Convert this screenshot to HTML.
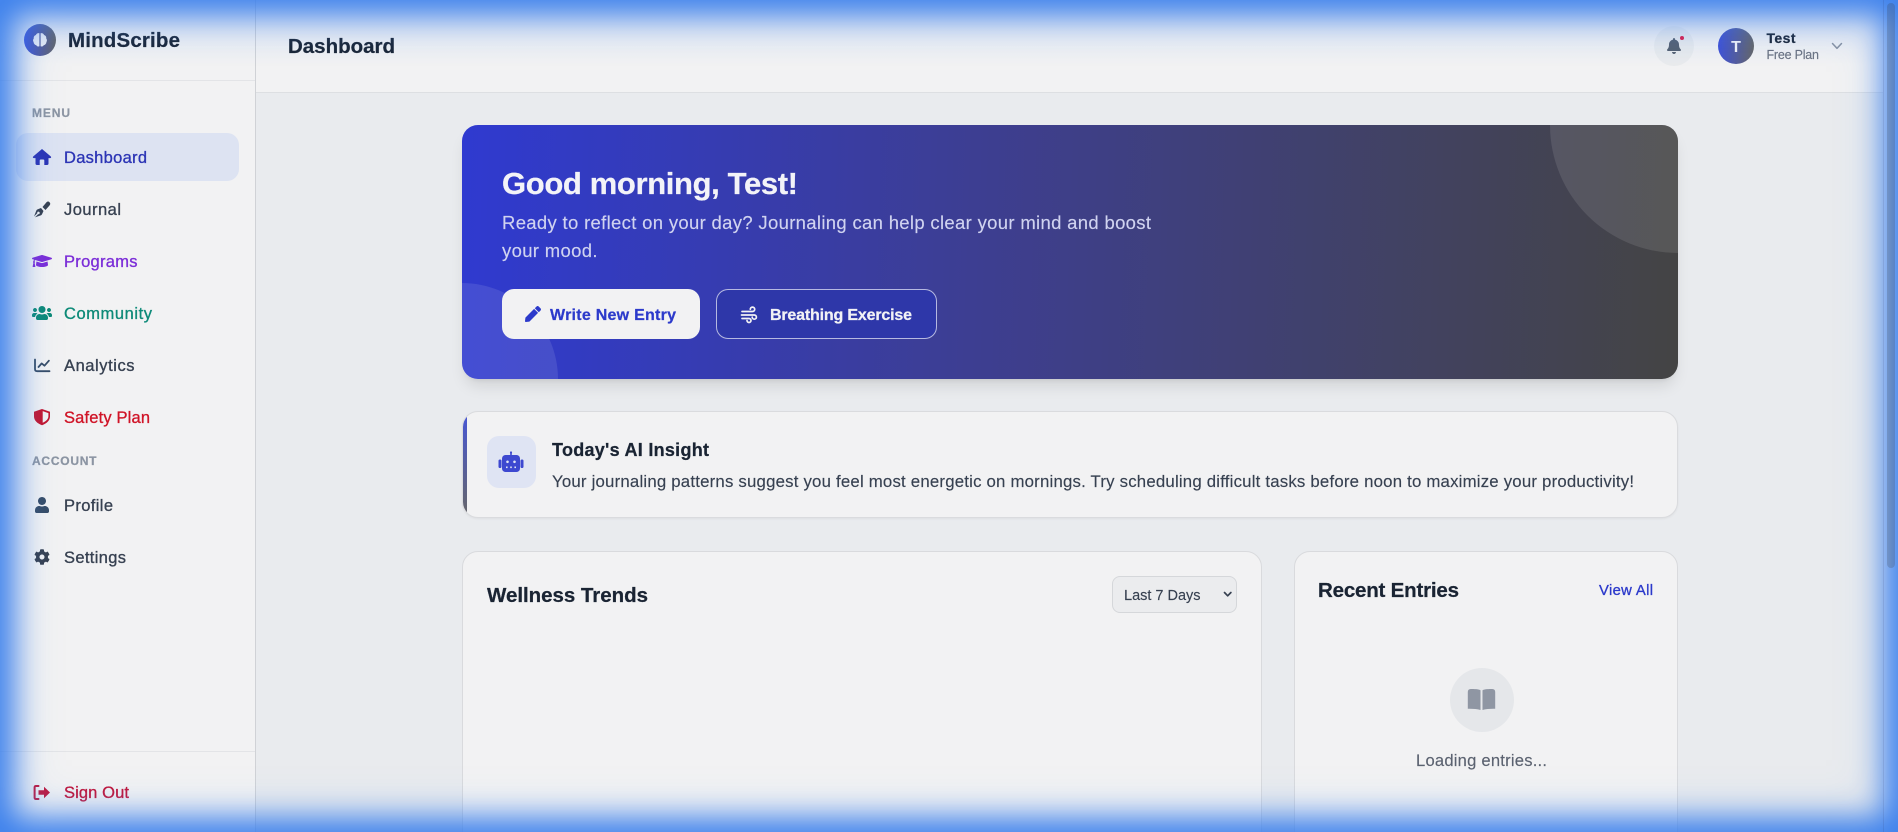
<!DOCTYPE html>
<html lang="en">
<head>
<meta charset="utf-8">
<title>MindScribe Dashboard</title>
<style>
html,body{margin:0;padding:0;width:1898px;height:832px;overflow:hidden;background:#e9ebee;font-family:"Liberation Sans",sans-serif}
#wrap{position:relative;width:1898px;height:832px;overflow:hidden;background:#e9ebee}
.b{position:absolute;box-sizing:border-box}
#side{left:0;top:0;width:256px;height:832px;background:#f2f2f3;border-right:1px solid #d0d2d6}
#s1{left:0;top:80px;width:255px;height:1px;background:#e3e4e7}
#s2{left:0;top:751px;width:255px;height:1px;background:#e3e4e7}
#act{left:16px;top:133px;width:223px;height:48px;background:#dde3f2;border-radius:12px}
#head{left:256px;top:0;width:1627px;height:93px;background:#f2f2f3;border-bottom:1px solid #dddfe2}
#logo{left:24px;top:24px;width:32px;height:32px;border-radius:50%;background:linear-gradient(90deg,#3f51d8,#666)}
#bell{left:1654px;top:26px;width:40px;height:40px;border-radius:50%;background:#e9ebed}
#ava{left:1718px;top:28px;width:36px;height:36px;border-radius:50%;background:linear-gradient(90deg,#3f51d8,#666)}
#hero{left:462px;top:125px;width:1216px;height:254px;border-radius:16px;background:linear-gradient(92deg,#2f3ad0 0%,#3d3e92 42%,#444 100%);box-shadow:0 10px 15px -3px rgba(0,0,0,.1),0 4px 6px -4px rgba(0,0,0,.1);overflow:hidden}
#c1{left:1088px;top:-128px;width:256px;height:256px;border-radius:50%;background:rgba(255,255,255,.1)}
#c2{left:-96px;top:158px;width:192px;height:192px;border-radius:50%;background:rgba(255,255,255,.1)}
#w{left:502px;top:289px;width:198px;height:50px;border-radius:12px;background:#f2f2f3}
#br{left:716px;top:289px;width:221px;height:50px;border-radius:12px;background:#2e37a9;border:1px solid rgba(255,255,255,.65)}
#ins{left:462px;top:411px;width:1216px;height:107px;border-radius:16px;background:#f2f2f3;border:1px solid #dadbde;box-shadow:0 1px 2px rgba(0,0,0,.05);overflow:hidden}
#bar{left:-1px;top:-1px;width:5px;height:107px;background:linear-gradient(180deg,#4656d8,#666)}
#rb{left:487px;top:436px;width:49px;height:52px;border-radius:12px;background:#dfe4f3}
.card{top:551px;height:320px;border-radius:16px;background:#f2f2f3;border:1px solid #d9dadd}
#wt{left:462px;width:800px}
#re{left:1294px;width:384px}
#sel{left:1112px;top:576px;width:125px;height:37px;border-radius:8px;background:#ebecee;border:1px solid #d5d7da}
#bk{left:1450px;top:668px;width:64px;height:64px;border-radius:50%;background:#e5e7ea}
#trk{left:1883px;top:0;width:15px;height:832px;background:#f2f2f3}
#lay{position:absolute;left:0;top:0}
#glow{position:absolute;left:0;top:0;width:1898px;height:832px;box-shadow:inset 0 0 30px 13px #3c80ec,inset 0 0 60px 0 rgba(60,128,236,.35);pointer-events:none}
#gt{left:0;top:0;width:1898px;height:65px;background:linear-gradient(180deg,rgba(60,128,236,.15),rgba(60,128,236,0))}
#tl{left:1883px;top:0;width:1px;height:832px;background:rgba(40,60,110,.14)}
#thm{left:1887px;top:3px;width:8px;height:565px;border-radius:4px;background:rgba(60,60,60,.22)}
text{font-family:"Liberation Sans",sans-serif}
.m{stroke:currentColor;stroke-width:.32;fill:currentColor}
.t{stroke:currentColor;stroke-width:.14;fill:currentColor}
.h{font-weight:700;stroke:currentColor;stroke-width:.25;fill:currentColor}
.n{font-size:16.5px}
</style>
</head>
<body>
<div id="wrap">
<div class="b" id="side"></div>
<div class="b" id="s1"></div>
<div class="b" id="s2"></div>
<div class="b" id="act"></div>
<div class="b" id="logo"></div>
<div class="b" id="head"></div>
<div class="b" id="bell"></div>
<div class="b" id="ava"></div>
<div class="b" id="hero"><div class="b" id="c1"></div><div class="b" id="c2"></div></div>
<div class="b" id="w"></div>
<div class="b" id="br"></div>
<div class="b" id="ins"><div class="b" id="bar"></div></div>
<div class="b" id="rb"></div>
<div class="b card" id="wt"></div>
<div class="b card" id="re"></div>
<div class="b" id="sel"></div>
<div class="b" id="bk"></div>
<div class="b" id="trk"></div>

<svg id="lay" width="1898" height="832" viewBox="0 0 1898 832" xmlns="http://www.w3.org/2000/svg">
<!-- logo -->
<path d="M39.400 33.200c-1.600-.4-3 .4-3.500 1.800-1.500.4-2.400 1.900-2.100 3.400-.9 1-1 2.600-.2 3.700.1 1.600 1.200 2.800 2.700 3.100.7 1.200 2.100 1.600 3.100 1.100zM40.600 33.200c1.600-.4 3 .4 3.500 1.800 1.500.4 2.400 1.900 2.100 3.400.9 1 1 2.600.2 3.700-.1 1.600-1.200 2.800-2.700 3.100-.7 1.200-2.100 1.600-3.100 1.100z" fill="#f0f1f6"/>
<text x="68" y="47" class="h" font-size="20.500" style="color:#1a2433" textLength="112" lengthAdjust="spacing">MindScribe</text>
<text x="288" y="53" class="h" font-size="20.500" style="color:#1a2433" textLength="107" lengthAdjust="spacing">Dashboard</text>

<text x="32" y="117" class="h" font-size="12" style="color:#8c95a3" textLength="38" lengthAdjust="spacing">MENU</text>
<text x="32" y="465" class="h" font-size="12" style="color:#8c95a3" textLength="64.500" lengthAdjust="spacing">ACCOUNT</text>

<!-- nav icons -->
<path fill="#2c35b5" d="M42 149l8.700 7.400q.8.800 .3 1.300-.4.400-1 .4H48.500v5.400q0 1.500-1.500 1.500h-2.700v-4.500q0-1-1-1h-2.600q-1 0-1 1V165H37q-1.500 0-1.500-1.500V158.100H34q-.6 0-1-.4-.5-.5.3-1.300z"/>
<g fill="#374151"><path d="M42.500 207l3 3 4-4.500q1.500-2 0-3.300-1.300-1.300-3 0z"/><path d="M41 208l-3.500 1.400q-.9.400-1.200 1.200L34 216.500l3.200-3.200a1.300 1.300 0 1 1 .9.9l-3.200 3.200 5.900-2q.8-.3 1.200-1.200L43.500 211z"/></g>
<svg x="32" y="253" width="20" height="16" viewBox="0 0 640 512"><path fill="#7c2ed8" d="M622.340 153.200L343.400 67.500c-15.200-4.670-31.600-4.670-46.790 0L17.660 153.200c-23.540 7.230-23.540 38.360 0 45.590l48.630 14.940c-10.670 13.190-17.230 29.280-17.880 46.900C38.780 266.150 32 276.110 32 288c0 10.780 5.680 19.850 13.860 25.650L20.330 428.530C18.110 438.520 25.710 448 35.940 448h56.110c10.240 0 17.840-9.480 15.620-19.470L82.140 313.650C90.320 307.850 96 298.780 96 288c0-11.570-6.470-21.250-15.660-26.870.76-15.020 8.440-28.300 20.690-36.720L296.600 284.500c9.060 2.780 26.440 6.250 46.790 0l278.950-85.700c23.550-7.240 23.550-38.360 0-45.600zM352.790 315.090c-28.530 8.760-52.840 3.920-65.590 0l-145.020-44.550L128 384c0 35.350 85.960 64 192 64s192-28.650 192-64l-14.180-113.470-145.030 44.560z"/></svg>
<svg x="32" y="305" width="20" height="16" viewBox="0 0 640 512"><path fill="#0d8a78" d="M96 224c35.300 0 64-28.700 64-64s-28.700-64-64-64-64 28.700-64 64 28.700 64 64 64zm448 0c35.300 0 64-28.700 64-64s-28.700-64-64-64-64 28.700-64 64 28.700 64 64 64zm32 32h-64c-17.600 0-33.500 7.100-45.100 18.600 40.300 22.100 68.900 62 75.100 109.400h66c17.700 0 32-14.300 32-32v-32c0-35.300-28.700-64-64-64zm-256 0c61.900 0 112-50.100 112-112S381.900 32 320 32 208 82.100 208 144s50.100 112 112 112zm76.800 32h-8.300c-20.800 10-43.900 16-68.500 16s-47.600-6-68.500-16h-8.300C179.600 288 128 339.600 128 403.200V432c0 26.500 21.500 48 48 48h288c26.500 0 48-21.500 48-48v-28.800c0-63.600-51.600-115.200-115.200-115.200zm-223.700-13.400C161.500 263.100 145.600 256 128 256H64c-35.300 0-64 28.700-64 64v32c0 17.700 14.300 32 32 32h65.900c6.300-47.400 34.900-87.300 75.200-109.400z"/></svg>
<g fill="none" stroke="#374d68" stroke-width="1.800" stroke-linecap="round" stroke-linejoin="round"><path d="M35 359.500V369q0 2.200 2.200 2.200H49.500"/><path d="M38.500 367l3.200-3.600 2.800 2.300 4.400-5"/></g>
<path d="M42 409l8 2.800v4.600c0 4-3.200 7.100-8 8.800-4.800-1.700-8-4.800-8-8.800v-4.600z" fill="#c4162f"/><path d="M42.700 411.100v11.700c3.300-1.500 5.700-3.700 5.700-6.500v-3.200z" fill="#f2f2f3"/>
<svg x="35" y="497" width="14" height="16" viewBox="0 0 448 512"><path fill="#374d68" d="M224 256c70.700 0 128-57.300 128-128S294.700 0 224 0 96 57.300 96 128s57.300 128 128 128zm89.600 32h-16.700c-22.200 10.200-46.900 16-72.900 16s-50.600-5.800-72.900-16h-16.700C60.200 288 0 348.200 0 422.400V464c0 26.500 21.500 48 48 48h352c26.500 0 48-21.500 48-48v-41.600c0-74.200-60.200-134.400-134.400-134.400z"/></svg>
<svg x="34" y="549" width="16" height="16" viewBox="0 0 512 512"><path fill="#374151" d="M487.400 315.700l-42.600-24.600c4.300-23.200 4.300-47 0-70.200l42.600-24.600c4.900-2.800 7.100-8.600 5.500-14-11.100-35.600-30-67.800-54.700-94.600-3.800-4.100-10-5.100-14.800-2.300L380.800 110c-17.900-15.400-38.500-27.300-60.800-35.100V25.800c0-5.600-3.900-10.500-9.400-11.700-36.700-8.200-74.300-7.800-109.200 0-5.500 1.200-9.400 6.100-9.400 11.700V75c-22.200 7.900-42.800 19.800-60.800 35.100L88.700 85.500c-4.900-2.800-11-1.900-14.800 2.300-24.700 26.700-43.600 58.900-54.700 94.600-1.700 5.400.6 11.200 5.500 14L67.300 221c-4.300 23.200-4.300 47 0 70.200l-42.600 24.600c-4.900 2.800-7.100 8.600-5.500 14 11.100 35.600 30 67.800 54.700 94.600 3.800 4.100 10 5.100 14.800 2.300l42.600-24.600c17.900 15.400 38.500 27.300 60.800 35.100v49.200c0 5.600 3.900 10.500 9.400 11.700 36.700 8.200 74.300 7.800 109.200 0 5.500-1.200 9.400-6.100 9.400-11.700v-49.200c22.200-7.900 42.800-19.800 60.800-35.100l42.600 24.600c4.900 2.800 11 1.900 14.800-2.300 24.700-26.700 43.600-58.900 54.700-94.600 1.500-5.500-.7-11.300-5.600-14.100zM256 336c-44.100 0-80-35.900-80-80s35.900-80 80-80 80 35.900 80 80-35.900 80-80 80z"/></svg>
<path d="M38.500 786h-2.500q-1.400 0-1.400 1.400v10.200q0 1.400 1.400 1.400h2.500" fill="none" stroke="#c2183c" stroke-width="2" stroke-linecap="round"/>
<path d="M44 786.700l6 5.800-6 5.800v-3.500h-5.500v-4.600H44z" fill="#c2183c"/>

<!-- nav labels -->
<text x="64" y="163" class="n m" style="color:#2c35b5" textLength="83" lengthAdjust="spacing">Dashboard</text>
<text x="64" y="215" class="n m" style="color:#374151" textLength="57" lengthAdjust="spacing">Journal</text>
<text x="64" y="267" class="n m" style="color:#7c2ed8" textLength="73.500" lengthAdjust="spacing">Programs</text>
<text x="64" y="319" class="n m" style="color:#0d8a78" textLength="88" lengthAdjust="spacing">Community</text>
<text x="64" y="371" class="n m" style="color:#374151" textLength="70.500" lengthAdjust="spacing">Analytics</text>
<text x="64" y="423" class="n m" style="color:#d01427" textLength="86" lengthAdjust="spacing">Safety Plan</text>
<text x="64" y="511" class="n m" style="color:#374151" textLength="49" lengthAdjust="spacing">Profile</text>
<text x="64" y="563" class="n m" style="color:#374151" textLength="62" lengthAdjust="spacing">Settings</text>
<text x="64" y="798" class="n m" style="color:#c2183c" textLength="65" lengthAdjust="spacing">Sign Out</text>

<!-- header right -->
<svg x="1667" y="38" width="14" height="16" viewBox="0 0 448 512"><path fill="#566171" d="M224 512c35.320 0 63.970-28.650 63.970-64H160.030c0 35.350 28.650 64 63.970 64zm215.390-149.710c-19.320-20.760-55.470-51.990-55.470-154.290 0-77.700-54.480-139.900-127.940-155.160V32c0-17.670-14.320-32-31.980-32s-31.980 14.330-31.980 32v20.840C118.560 68.100 64.080 130.300 64.080 208c0 102.300-36.150 133.530-55.470 154.290-6 6.450-8.660 14.160-8.610 21.710.11 16.400 12.980 32 32.100 32h383.800c19.120 0 32-15.600 32.100-32 .05-7.550-2.610-15.270-8.610-21.710z"/></svg>
<circle cx="1682" cy="38" r="2" fill="#e11d48"/>
<text x="1736" y="52" font-weight="700" font-size="16" fill="#f4f4f8" text-anchor="middle">T</text>
<text x="1766.500" y="43" class="h" font-size="14" style="color:#1a2433" textLength="29" lengthAdjust="spacing">Test</text>
<text x="1766.500" y="59" font-size="12.500" class="t" style="color:#6b7280" textLength="52.500" lengthAdjust="spacing">Free Plan</text>
<path d="M1832.500 43.500l4.500 4.800 4.500-4.800" fill="none" stroke="#8b93a1" stroke-width="1.500" stroke-linecap="round" stroke-linejoin="round"/>

<!-- hero -->
<text x="502" y="194" class="h" font-size="31" style="color:#f3f3f8" textLength="296" lengthAdjust="spacing">Good morning, Test!</text>
<text x="502" y="229" font-size="18.500" class="t" style="color:#d0d3f0" textLength="649" lengthAdjust="spacing">Ready to reflect on your day? Journaling can help clear your mind and boost</text>
<text x="502" y="257" font-size="18.500" class="t" style="color:#d0d3f0" textLength="95.500" lengthAdjust="spacing">your mood.</text>
<svg x="525" y="306" width="16" height="16" viewBox="0 0 512 512"><path fill="#2c3acb" d="M290.740 93.240l128.020 128.020-277.990 277.990-114.140 12.600C11.350 513.540-1.560 500.620.14 485.340l12.700-114.220 277.900-278.880zm207.200-19.060l-60.110-60.110c-18.750-18.750-49.160-18.750-67.910 0l-56.550 56.550 128.020 128.020 56.550-56.550c18.750-18.760 18.750-49.160 0-67.910z"/></svg>
<text x="550" y="320" class="h" font-size="16" style="color:#2c3acb" textLength="126" lengthAdjust="spacing">Write New Entry</text>
<g fill="none" stroke="#f2f2f5" stroke-width="1.700" stroke-linecap="round"><path d="M742 311.500h10.500a2.200 2.200 0 1 0-2.200-2.200"/><path d="M741.500 315h12.800a2.100 2.100 0 1 1-2.100 2.100"/><path d="M742 318.500h7a2 2 0 1 1-2 2"/></g>
<text x="770" y="320" class="h" font-size="16" style="color:#f2f2f5" textLength="142" lengthAdjust="spacing">Breathing Exercise</text>

<!-- insight -->
<g fill="#3d48d0"><rect x="502" y="455" width="18" height="17" rx="3.500"/><rect x="510.200" y="452" width="1.600" height="4"/><circle cx="511" cy="452.500" r="1.100"/><rect x="498.500" y="459.500" width="3" height="8.500" rx="1.400"/><rect x="520.500" y="459.500" width="3" height="8.500" rx="1.400"/></g>
<g fill="#dfe4f3"><circle cx="507.500" cy="461.800" r="1.300"/><circle cx="514.500" cy="461.800" r="1.300"/><rect x="506" y="466.500" width="1.600" height="1.600"/><rect x="510.200" y="466.500" width="1.600" height="1.600"/><rect x="514.400" y="466.500" width="1.600" height="1.600"/></g>
<text x="552" y="456" class="h" font-size="18" style="color:#1a2433" textLength="157" lengthAdjust="spacing">Today's AI Insight</text>
<text x="552" y="487" font-size="16.800" class="t" style="color:#374151" textLength="1082" lengthAdjust="spacing">Your journaling patterns suggest you feel most energetic on mornings. Try scheduling difficult tasks before noon to maximize your productivity!</text>

<!-- cards -->
<text x="487" y="602" class="h" font-size="20.500" style="color:#1a2433" textLength="161" lengthAdjust="spacing">Wellness Trends</text>
<text x="1124" y="600" font-size="14.500" class="t" style="color:#374151" textLength="76.500" lengthAdjust="spacing">Last 7 Days</text>
<path d="M1224.500 592.500l3.200 3.300 3.200-3.300" fill="none" stroke="#374151" stroke-width="1.700" stroke-linecap="round" stroke-linejoin="round"/>
<text x="1318" y="597" class="h" font-size="20.500" style="color:#1a2433" textLength="141" lengthAdjust="spacing">Recent Entries</text>
<text x="1599" y="595" font-size="14.800" class="m" style="color:#2c3acb" textLength="54" lengthAdjust="spacing">View All</text>
<path fill="#8f96a3" d="M1467.800 692q0-3 3-3c3.500 0 7 0 9.700 1.200v19.800c-3.500-1-8-1.300-12.700-1.200zM1495.200 692q0-3-3-3c-3.500 0-7 0-9.700 1.200v19.800c3.500-1 8-1.300 12.700-1.200z"/>
<text x="1416" y="766" font-size="16.600" class="t" style="color:#5b6270" textLength="131" lengthAdjust="spacing">Loading entries...</text>
</svg>
<div id="glow"></div>
<div class="b" id="gt"></div>
<div class="b" id="tl"></div>
<div class="b" id="thm"></div>
</div>
</body>
</html>
